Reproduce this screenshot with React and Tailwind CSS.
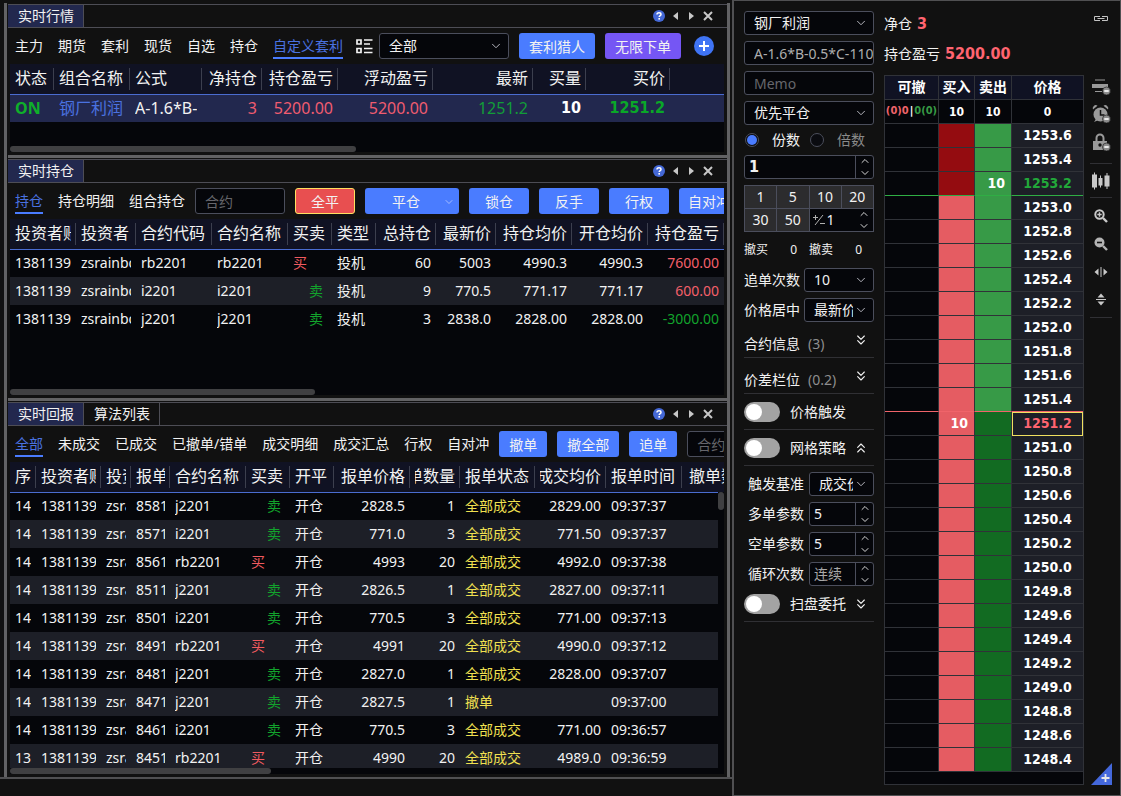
import { ChevronDown, ChevronUp, ChevronsDown, ChevronsUp } from 'lucide-react'

const quoteCols = [
  { label: '状态', w: 44 },
  { label: '组合名称', w: 76 },
  { label: '公式', w: 72 },
  { label: '净持仓', w: 60, right: true },
  { label: '持仓盈亏', w: 76, right: true },
  { label: '浮动盈亏', w: 95, right: true },
  { label: '最新', w: 100, right: true },
  { label: '买量', w: 53, right: true },
  { label: '买价', w: 84, right: true },
  { label: '' },
]

const positionCols = [
  { label: '投资者账', w: 66 },
  { label: '投资者', w: 60 },
  { label: '合约代码', w: 76 },
  { label: '合约名称', w: 76 },
  { label: '买卖', w: 44 },
  { label: '类型', w: 44 },
  { label: '总持仓', w: 60, right: true },
  { label: '最新价', w: 60, right: true },
  { label: '持仓均价', w: 76, right: true },
  { label: '开仓均价', w: 76, right: true },
  { label: '持仓盈亏', w: 76, right: true },
]

const orderCols = [
  { label: '序', w: 26 },
  { label: '投资者账', w: 65 },
  { label: '投资', w: 30 },
  { label: '报单', w: 39 },
  { label: '合约名称', w: 76 },
  { label: '买卖', w: 44 },
  { label: '开平', w: 44 },
  { label: '报单价格', w: 76, right: true },
  { label: '单数量', w: 50, right: true },
  { label: '报单状态', w: 75 },
  { label: '成交均价', w: 71, right: true },
  { label: '报单时间', w: 76 },
  { label: '撤单数量', w: 76, right: true },
]

const positions = [
  { code: 'rb2201', side: '买', total: '60', last: '5003', avg: '4990.3', open: '4990.3', pnl: '7600.00' },
  { code: 'i2201', side: '卖', total: '9', last: '770.5', avg: '771.17', open: '771.17', pnl: '600.00' },
  { code: 'j2201', side: '卖', total: '3', last: '2838.0', avg: '2828.00', open: '2828.00', pnl: '-3000.00' },
]

const orders = [
  ['14', '8581', 'j2201', '卖', '2828.5', '1', '全部成交', '2829.00', '09:37:37'],
  ['14', '8571', 'i2201', '卖', '771.0', '3', '全部成交', '771.50', '09:37:37'],
  ['14', '8561', 'rb2201', '买', '4993', '20', '全部成交', '4992.0', '09:37:38'],
  ['14', '8511', 'j2201', '卖', '2826.5', '1', '全部成交', '2827.00', '09:37:11'],
  ['14', '8501', 'i2201', '卖', '770.5', '3', '全部成交', '771.00', '09:37:13'],
  ['14', '8491', 'rb2201', '买', '4991', '20', '全部成交', '4990.0', '09:37:12'],
  ['14', '8481', 'j2201', '卖', '2827.0', '1', '全部成交', '2828.00', '09:37:07'],
  ['14', '8471', 'j2201', '卖', '2827.5', '1', '撤单', '', '09:37:00'],
  ['14', '8461', 'i2201', '卖', '770.5', '3', '全部成交', '771.00', '09:36:57'],
  ['13', '8451', 'rb2201', '买', '4990', '20', '全部成交', '4989.0', '09:36:59'],
]

const BID = 1251.2
const ASK = 1253.2
const ladder = Array.from({ length: 27 }, (_, i) => Math.round((1253.6 - i * 0.2) * 10) / 10)

// border under a ladder row, keyed by price
const rowLines = {
  '1253.2': 'border-b border-r border-b-[#2fae44] border-r-[#303238]',
  '1251.4': 'border-b border-r border-b-[#f0646a] border-r-[#303238]',
}
const plainLine = 'border-b border-r border-[#303238]'

function WindowControls() {
  return (
    <div className="ml-auto flex items-center pr-[14px] text-[#c8c8c8]">
      <button aria-label="帮助">
        <svg width="12" height="12" viewBox="0 0 12 12">
          <circle cx="6" cy="6" r="6" fill="#4468d6" />
          <path d="M4 4.6C4 3.3 4.9 2.7 6 2.7s2 .7 2 1.7C8 5.6 6.2 5.6 6.2 7" fill="none" stroke="#fff" strokeWidth="1.5" />
          <rect x="5.4" y="8" width="1.6" height="1.6" fill="#fff" />
        </svg>
      </button>
      <button aria-label="向左" className="ml-2">
        <svg width="5" height="8" viewBox="0 0 5 8"><path d="M5 0v8L0 4z" fill="currentColor" /></svg>
      </button>
      <button aria-label="向右" className="ml-[11px]">
        <svg width="5" height="8" viewBox="0 0 5 8"><path d="M0 0v8l5-4z" fill="currentColor" /></svg>
      </button>
      <button aria-label="关闭" className="ml-[9px]">
        <svg width="10" height="10" viewBox="0 0 10 10"><path d="M1 1l8 8M9 1L1 9" stroke="currentColor" strokeWidth="2" /></svg>
      </button>
    </div>
  )
}

function TabBar({ tabs }) {
  return (
    <div className="flex h-6 shrink-0 border-y border-[#4d4d55]">
      {tabs.map((t, i) => (
        <button
          key={t}
          className={`border-r border-[#4d4d55] pl-[10px] pr-[9px] leading-[22px] ${i === 0 ? 'bg-[#22284e]' : ''}`}
        >
          {t}
        </button>
      ))}
      <WindowControls />
    </div>
  )
}

function Filters({ items, active }) {
  return (
    <div className="flex shrink-0 gap-[15px]">
      {items.map((t) => (
        <button
          key={t}
          className={`h-[26px] whitespace-nowrap border-b-2 leading-[26px] ${t === active ? 'border-[#4a7cff] text-[#4a72e0]' : 'border-transparent'}`}
        >
          {t}
        </button>
      ))}
    </div>
  )
}

function Btn({ children, className = 'bg-[#4a7cff]' }) {
  return (
    <button className={`h-[26px] shrink-0 whitespace-nowrap rounded-[3px] pt-0.5 ${className}`}>{children}</button>
  )
}

function Toolbar({ children }) {
  return <div className="mr-[3px] flex h-9 shrink-0 items-center overflow-hidden pl-[7px]">{children}</div>
}

function Table({ cols, rows, big, selected, className = 'w-full' }) {
  return (
    <table className={`table-fixed border-collapse ${className}`}>
      <colgroup>
        {cols.map((c, i) => <col key={i} style={c.w ? { width: c.w } : undefined} />)}
      </colgroup>
      <thead>
        <tr className="h-[30px] bg-[#101223]">
          {cols.map((c, i) => (
            <th key={i} className="border-b border-[#4a6cd0] p-0 text-base font-normal">
              <div className={`flex h-[22px] pl-[5px] pr-1 leading-5 ${c.label ? 'border-r border-[#3c3f4e]' : ''}`}>
                <div className={`flex w-full overflow-hidden whitespace-nowrap ${c.right ? 'justify-end' : ''}`}>{c.label}</div>
              </div>
            </th>
          ))}
        </tr>
      </thead>
      <tbody>
        {rows.map((r, i) => (
          <tr key={i} className={`h-7 ${selected === i ? 'bg-[#22284e]' : i % 2 ? 'bg-[#1d1f27]' : ''}`}>
            {r.map((cell, j) => (
              <td key={j} className="p-0 pl-[5px] pr-[5px]">
                <div className={`flex overflow-hidden whitespace-nowrap ${big ? 'text-base' : ''} ${cols[j].right ? 'justify-end' : ''}`}>
                  {cell}
                </div>
              </td>
            ))}
          </tr>
        ))}
      </tbody>
    </table>
  )
}

function Side({ side }) {
  return side === '买'
    ? <span className="text-[#f05a5f]">买</span>
    : <span className="pl-4 text-[#12a32c]">卖</span>
}

function Panel({ tabs, toolbar, children, thumb, className }) {
  return (
    <section className={`flex flex-col ${className}`}>
      <TabBar tabs={tabs} />
      <Toolbar>{toolbar}</Toolbar>
      <div className="relative ml-0.5 mr-[3px] min-h-0 flex-1 overflow-hidden bg-[#05060a]">{children}</div>
      <div className="mb-[3px] ml-0.5 mr-[3px] h-1.5 shrink-0 bg-[#05060a]">
        <div className={`h-full rounded-full bg-[#404042] ${thumb}`} />
      </div>
    </section>
  )
}

function Select({ label, value, className = '', boxClass = '' }) {
  return (
    <div className={`relative ${boxClass}`}>
      <select
        aria-label={label}
        className={`block w-full appearance-none overflow-hidden rounded-[3px] border border-[#4b4e5c] bg-[#05060a] pl-[9px] pr-5 ${className}`}
      >
        <option>{value}</option>
      </select>
      <ChevronDown size={14} strokeWidth={1.7} className="pointer-events-none absolute right-1.5 top-1/2 -translate-y-1/2 text-[#b4b4bc]" />
    </div>
  )
}

function Arrows({ className = '' }) {
  return (
    <div className={`flex w-[18px] shrink-0 flex-col items-center justify-center text-[#d8d8d8] ${className}`}>
      <button aria-label="增加"><ChevronUp size={12} strokeWidth={2} /></button>
      <button aria-label="减少"><ChevronDown size={12} strokeWidth={2} /></button>
    </div>
  )
}

function Spinner({ label, value, inputClass = '' }) {
  return (
    <div className="flex h-6 min-w-0 flex-1 overflow-hidden rounded-[3px] border border-[#4b4e5c] bg-[#05060a]">
      <input aria-label={label} defaultValue={value} className={`min-w-0 flex-1 pl-1 outline-none ${inputClass}`} />
      <Arrows className="border-l border-[#4b4e5c]" />
    </div>
  )
}

function Toggle({ label, children }) {
  return (
    <div className="flex h-9 items-center border-b border-[#303034]">
      <label className="flex items-center gap-[10px]">
        <input
          type="checkbox"
          className="h-5 w-9 appearance-none rounded-full bg-[#a3a3a3] before:ml-0.5 before:mt-0.5 before:block before:h-4 before:w-4 before:rounded-full before:bg-white"
        />
        {label}
      </label>
      {children}
    </div>
  )
}

function OrderForm() {
  return (
    <div className="w-[130px] shrink-0 pt-[10px]">
      <div className="flex flex-col gap-1.5">
        <Select label="组合" value="钢厂利润" className="h-6" />
        <input aria-label="公式" defaultValue="A-1.6*B-0.5*C-110" className="h-6 rounded-[3px] border border-[#4b4e5c] bg-[#05060a] pl-[9px] text-[#aeaeae]" />
        <input aria-label="备注" placeholder="Memo" className="h-6 rounded-[3px] border border-[#4b4e5c] bg-[#05060a] pl-[9px] placeholder:text-[#66666c]" />
        <Select label="平仓方式" value="优先平仓" className="h-6" />
      </div>

      <div className="flex h-[30px] items-center gap-[10px] pl-px">
        {['份数', '倍数'].map((t, i) => (
          <label key={t} className={`flex items-center gap-[13px] ${i ? 'text-[#8a8a8a]' : ''}`}>
            <input
              type="radio"
              name="unit"
              defaultChecked={i === 0}
              className="h-[14px] w-[14px] appearance-none rounded-full border border-[#4b4e5c] bg-[#0a0b10] p-px before:block before:h-[10px] before:w-[10px] before:rounded-full checked:before:bg-[#4a7cff]"
            />
            {t}
          </label>
        ))}
      </div>

      <div className="flex">
        <Spinner label="数量" value="1" inputClass="font-['DejaVu_Sans_Condensed','DejaVu_Sans',sans-serif] text-base font-bold" />
      </div>

      <div className="mt-1.5 grid grid-cols-4 gap-px border border-[#4b4e5c] bg-[#4b4e5c]">
        {['1', '5', '10', '20', '30', '50'].map((n) => (
          <button key={n} className="h-[22px] bg-[#2c2c2e] leading-[22px]">{n}</button>
        ))}
        <div className="col-span-2 flex h-[22px] items-center bg-[#05060a]">
          <svg width="12" height="12" viewBox="0 0 12 12" className="ml-[3px] shrink-0" stroke="#b0b0b0" fill="none">
            <path d="M0 3.5h5M2.5 1v5M2 11L10 1M7 9.5h5" />
          </svg>
          <input aria-label="自定义数量" defaultValue="1" className="w-0 flex-1 pl-0.5 outline-none" />
          <Arrows />
        </div>
      </div>

      <div className="flex h-9 items-center text-xs">
        <span>撤买</span>
        <span className="w-[29px] text-right">0</span>
        <span className="ml-3">撤卖</span>
        <span className="w-[29px] text-right">0</span>
      </div>

      <div className="flex flex-col gap-1.5">
        <div className="flex items-center justify-between whitespace-nowrap">
          追单次数
          <Select label="追单次数" value="10" className="h-6" boxClass="w-[70px]" />
        </div>
        <div className="flex items-center justify-between whitespace-nowrap">
          价格居中
          <Select label="价格居中" value="最新价" className="h-6" boxClass="w-[70px]" />
        </div>
      </div>

      {[['合约信息', '(3)'], ['价差栏位', '(0.2)']].map(([name, n]) => (
        <button key={name} className="flex h-9 w-full items-center border-b border-[#303034] pt-2">
          {name}
          <span className="ml-2 text-[#8e8e8e]">{n}</span>
          <ChevronsDown size={16} strokeWidth={1.7} className="mb-2 ml-auto mr-[5px]" />
        </button>
      ))}
      <Toggle label="价格触发" />
      <Toggle label="网格策略">
        <ChevronsUp size={16} strokeWidth={1.7} className="ml-auto mr-[5px]" />
      </Toggle>

      <div className="flex flex-col gap-1.5 whitespace-nowrap pl-1 pt-1.5">
        <div className="flex items-center gap-[5px]">
          触发基准
          <Select label="触发基准" value="成交价" className="h-6" boxClass="min-w-0 flex-1" />
        </div>
        <div className="flex items-center gap-[5px]">多单参数<Spinner label="多单参数" value="5" /></div>
        <div className="flex items-center gap-[5px]">空单参数<Spinner label="空单参数" value="5" /></div>
        <div className="flex items-center gap-[5px]">循环次数<Spinner label="循环次数" value="连续" inputClass="text-[#a8a8a8]" /></div>
      </div>
      <Toggle label="扫盘委托">
        <ChevronsDown size={16} strokeWidth={1.7} className="ml-auto mr-[5px]" />
      </Toggle>
    </div>
  )
}

function Ladder() {
  return (
    <div className="w-[200px] shrink-0 pt-2">
      <div className="flex h-[30px] items-center gap-[5px]">
        净仓
        <b className="font-['DejaVu_Sans_Condensed','DejaVu_Sans',sans-serif] text-base text-[#ff6470]">3</b>
      </div>
      <div className="flex h-[30px] items-center gap-[5px]">
        持仓盈亏
        <b className="font-['DejaVu_Sans_Condensed','DejaVu_Sans',sans-serif] text-base text-[#ff6470]">5200.00</b>
      </div>
      <div className="mt-[6px] border border-[#303238] bg-[#05060a] pb-3">
        <table className="w-full table-fixed border-separate border-spacing-0 text-center font-['DejaVu_Sans_Condensed','DejaVu_Sans','Noto_Sans_CJK_SC',sans-serif] font-bold text-white">
          <colgroup>
            <col className="w-[54px]" />
            <col className="w-9" />
            <col className="w-[37px]" />
            <col />
          </colgroup>
          <thead>
            <tr className="h-6 bg-[#101223]">
              {['可撤', '买入', '卖出', '价格'].map((t) => (
                <th key={t} className="border-b border-r border-[#303238] p-0 pb-0.5 last:border-r-0">{t}</th>
              ))}
            </tr>
            <tr className="h-6 text-xs">
              <th className="whitespace-nowrap border-b border-r border-[#303238] p-0 text-[11px]">
                <div className="flex justify-center">
                  <span className="text-[#f0646a]">(0)0</span>
                  <span className="px-px">|</span>
                  <span className="text-[#379a45]">0(0)</span>
                </div>
              </th>
              <th className="border-b border-r border-[#303238] p-0">10</th>
              <th className="border-b border-r border-[#303238] p-0">10</th>
              <th className="border-b border-[#303238] p-0">0</th>
            </tr>
          </thead>
          <tbody>
            {ladder.map((p) => {
              const price = p.toFixed(1)
              const line = rowLines[price] || plainLine
              const tone = p === ASK ? 'text-[#22a83a]' : p === BID ? 'text-[#ff6470]' : ''
              return (
                <tr key={p} className="h-6">
                  <td className={`p-0 ${line}`} />
                  <td className={`p-0 pb-0.5 pr-1.5 text-right ${line} ${p >= ASK ? 'bg-[#940c10]' : 'bg-[#e55c62]'}`}>
                    {p === BID ? '10' : ''}
                  </td>
                  <td className={`p-0 pb-0.5 pr-1.5 text-right ${line} ${p > BID ? 'bg-[#379a47]' : 'bg-[#126b22]'}`}>
                    {p === ASK ? '10' : ''}
                  </td>
                  <td className={`border-r-0 bg-[#1d1f27] p-0 pb-0.5 ${line} ${tone} ${p === BID ? 'outline -outline-offset-1 outline-[#f0e060]' : ''}`}>
                    {price}
                  </td>
                </tr>
              )
            })}
          </tbody>
        </table>
      </div>
    </div>
  )
}

function Minus() {
  return (
    <>
      <circle cx="15.5" cy="15" r="4" fill="#8d8d8d" stroke="#111" strokeWidth=".6" />
      <rect x="13.3" y="14.2" width="4.4" height="1.6" fill="#fff" />
    </>
  )
}

function SideTools() {
  return (
    <div className="relative flex flex-1 flex-col items-center pr-[2px] pt-[14px] text-[#c4c4c4]">
      <button aria-label="联动">
        <svg width="14" height="8" viewBox="0 0 14 8" fill="none" stroke="#c4c4c4">
          <path d="M6 5.5H.5v-4H6M8 1.500h5.500v4H8M3.500 3.500h7" />
        </svg>
      </button>
      <div className="mt-[53px] flex flex-col gap-2">
        <button aria-label="线条">
          <svg width="20" height="20" viewBox="0 0 20 20" fill="#9a9a9a">
            <path d="M4 3.500h10v1H4zM1 8h16v4H1zM4 15h7v1H4z" />
            <Minus />
          </svg>
        </button>
        <button aria-label="定时">
          <svg width="20" height="20" viewBox="0 0 20 20" fill="#9a9a9a">
            <path d="M2 5.500a3 3 0 0 1 4.500-3.700zM17 5.500a3 3 0 0 0-4.500-3.700zM3 18l2-3 1.500 1.500z" />
            <circle cx="9.500" cy="10.500" r="7" />
            <path d="M9.500 6v5h4" fill="none" stroke="#111" strokeWidth="1.500" />
            <Minus />
          </svg>
        </button>
        <button aria-label="锁定">
          <svg width="20" height="20" viewBox="0 0 20 20" fill="#9a9a9a">
            <path d="M5.500 10V6a3.500 3.500 0 0 1 7 0v4" fill="none" stroke="#9a9a9a" strokeWidth="2" />
            <rect x="2" y="9" width="14" height="9" />
            <circle cx="9" cy="13" r="1.700" fill="#111" />
            <Minus />
          </svg>
        </button>
      </div>
      <div className="mt-[11px] h-px w-[22px] shrink-0 bg-[#303034]" />
      <button aria-label="K线" className="mt-2">
        <svg width="18" height="18" viewBox="0 0 18 18" fill="#c9c9c9">
          <path d="M0 2.500h5v13H0zM6.500 6h4v7.500h-4zM12.500 3.500h5v11h-5zM2 .500h1v17H2zM8 3.500h1v12H8zM14.500 1h1v16h-1z" />
        </svg>
      </button>
      <div className="mt-[7px] h-px w-[22px] shrink-0 bg-[#303034]" />
      <div className="mt-[11px] flex flex-col gap-[14px]">
        <button aria-label="放大">
          <svg width="14" height="14" viewBox="0 0 14 14" fill="none" stroke="#c9c9c9">
            <circle cx="5.500" cy="5.500" r="4.200" strokeWidth="2" />
            <path d="M9 9l4 4" strokeWidth="2.400" />
            <path d="M3.300 5.500h4.400M5.500 3.300v4.400" strokeWidth="1.400" />
          </svg>
        </button>
        <button aria-label="缩小">
          <svg width="14" height="14" viewBox="0 0 14 14" fill="none" stroke="#b4b4b4">
            <circle cx="5.500" cy="5.500" r="5" fill="#b4b4b4" stroke="none" />
            <path d="M9 9l4 4" strokeWidth="2.400" />
            <path d="M3 5.500h5" stroke="#111" strokeWidth="1.600" />
          </svg>
        </button>
        <button aria-label="横向拉伸">
          <svg width="14" height="14" viewBox="0 0 14 14" fill="#c9c9c9">
            <path d="M4.500 3.500v7L.500 7zM9.500 3.500v7l4-3.500zM6.500 2h1v10h-1z" />
          </svg>
        </button>
        <button aria-label="纵向拉伸">
          <svg width="14" height="14" viewBox="0 0 14 14" fill="#c9c9c9">
            <path d="M3.500 4.500h7L7 .500zM3.500 8.500h7L7 12.500zM2 6h10v1H2z" />
          </svg>
        </button>
      </div>
      <div className="mt-[10px] h-px w-[22px] shrink-0 bg-[#303034]" />
      <button aria-label="添加" className="absolute bottom-[10px] right-2">
        <svg width="21" height="22" viewBox="0 0 21 22">
          <path d="M21 0v22H0z" fill="#4468dc" />
          <path d="M14.500 11v8M10.500 15h8" stroke="#e8e8e8" strokeWidth="1.800" />
        </svg>
      </button>
    </div>
  )
}

export default function App() {
  const quoteRow = [
    <b className="text-[#0fb02a]">ON</b>,
    <span className="text-[#4a72e0]">钢厂利润</span>,
    'A-1.6*B-',
    <span className="text-[#f05c70]">3</span>,
    <span className="text-[#f05c70]">5200.00</span>,
    <span className="text-[#f05c70]">5200.00</span>,
    <span className="text-[#129c38]">1251.2</span>,
    <b className="font-['DejaVu_Sans_Condensed','DejaVu_Sans',sans-serif] text-white">10</b>,
    <b className="font-['DejaVu_Sans_Condensed','DejaVu_Sans',sans-serif] text-[#0aa828]">1251.2</b>,
    '',
  ]

  const positionRows = positions.map((p) => [
    '1381139', 'zsrainbo', p.code, p.code, <Side side={p.side} />, '投机',
    p.total, p.last, p.avg, p.open,
    <span className={p.pnl.startsWith('-') ? 'text-[#12a32c]' : 'text-[#f4606a]'}>{p.pnl}</span>,
  ])

  const orderRows = orders.map(([no, id, code, side, price, qty, state, avg, time]) => [
    no, '1381139', 'zsra', id, code, <Side side={side} />, '开仓', price, qty,
    <span className="text-[#f0e050]">{state}</span>, avg, time, '',
  ])

  return (
    <div className="flex h-screen overflow-hidden bg-[#111111] font-['Noto_Sans','Noto_Sans_CJK_SC',sans-serif] text-sm text-[#f2f2f2]">
      {/* Docked windows */}
      <main className="flex min-w-0 flex-1 flex-col pb-[17px] pt-[3px]">
        <div className="flex min-h-0 flex-1 flex-col border-b-2 border-[#505052]">
          <div className="ml-1 mr-0.5 flex min-h-0 flex-1 flex-col border-x-[3px] border-[#626264] pl-px pt-px">
            <Panel
              className="h-[151px] shrink-0"
              tabs={['实时行情']}
              thumb="w-[346px]"
              toolbar={
                <>
                  <Filters items={['主力', '期货', '套利', '现货', '自选', '持仓', '自定义套利']} active="自定义套利" />
                  <button aria-label="列表" className="ml-[13px]">
                    <svg width="17" height="15" viewBox="0 0 17 15" fill="none" stroke="#f2f2f2" strokeWidth="1.700">
                      <path d="M1 1h4v4H1zM1 9.500h4v4H1zM8 1h8.500M8 5h6M8 9.500h8.500M8 13.500h8.500" />
                    </svg>
                  </button>
                  <Select label="分组" value="全部" className="h-[26px]" boxClass="ml-1.5 w-[130px] shrink-0" />
                  <Btn className="ml-[10px] w-[76px] bg-[#4a7cff]">套利猎人</Btn>
                  <Btn className="ml-[10px] w-[76px] bg-[#7556f4]">无限下单</Btn>
                  <button aria-label="新增" className="ml-[13px] shrink-0">
                    <svg width="20" height="20" viewBox="0 0 20 20">
                      <circle cx="10" cy="10" r="10" fill="#3f74f4" />
                      <path d="M10 5v10M5 10h10" stroke="#fff" strokeWidth="2" />
                    </svg>
                  </button>
                </>
              }
            >
              <Table cols={quoteCols} rows={[quoteRow]} big selected={0} />
            </Panel>
            <div className="mb-px h-[3px] shrink-0 bg-[#626264]" />

            <Panel
              className="h-[239px] shrink-0"
              tabs={['实时持仓']}
              thumb="w-[305px]"
              toolbar={
                <>
                  <Filters items={['持仓', '持仓明细', '组合持仓']} active="持仓" />
                  <input aria-label="合约" placeholder="合约" className="ml-[10px] h-[26px] w-[90px] shrink-0 rounded-[3px] border border-[#4b4e5c] bg-[#05060a] pl-[9px] placeholder:text-[#66666c]" />
                  <Btn className="ml-[10px] w-[60px] border border-[#ffdf60] bg-[#e84f50]">全平</Btn>
                  <Btn className="ml-[10px] flex w-[94px] items-center bg-[#4a7cff]">
                    <span className="flex-1 pl-1">平仓</span>
                    <ChevronDown size={12} strokeWidth={1.5} className="mr-1 text-[#c0d0ff]" />
                  </Btn>
                  {['锁仓', '反手', '行权', '自对冲'].map((t) => (
                    <Btn key={t} className="ml-[10px] w-[60px] bg-[#4a7cff]">{t}</Btn>
                  ))}
                </>
              }
            >
              <Table cols={positionCols} rows={positionRows} />
            </Panel>
            <div className="mb-px h-[3px] shrink-0 bg-[#626264]" />

            <Panel
              className="min-h-0 flex-1"
              tabs={['实时回报', '算法列表']}
              thumb="w-[261px]"
              toolbar={
                <>
                  <Filters items={['全部', '未成交', '已成交', '已撤单/错单', '成交明细', '成交汇总', '行权', '自对冲']} active="全部" />
                  <Btn className="ml-[10px] w-12 bg-[#4a7cff]">撤单</Btn>
                  <Btn className="ml-[10px] w-[62px] bg-[#4a7cff]">撤全部</Btn>
                  <Btn className="ml-[10px] w-12 bg-[#4a7cff]">追单</Btn>
                  <input aria-label="合约筛选" placeholder="合约" className="ml-[10px] h-[26px] w-[90px] shrink-0 rounded-[3px] border border-[#4b4e5c] bg-[#05060a] pl-[9px] placeholder:text-[#66666c]" />
                </>
              }
            >
              <Table cols={orderCols} rows={orderRows} className="w-[748px] min-w-full" />
              <div className="absolute bottom-0 right-0 top-[30px] w-1.5 bg-[#05060a]">
                <div className="h-[18px] rounded-full bg-[#404042]" />
              </div>
            </Panel>
          </div>
        </div>
      </main>

      {/* Order ladder */}
      <aside className="flex w-[389px] shrink-0 border border-l-2 border-[#505052] pl-[10px]">
        <OrderForm />
        <div className="w-[10px] shrink-0" />
        <Ladder />
        <SideTools />
      </aside>
    </div>
  )
}
